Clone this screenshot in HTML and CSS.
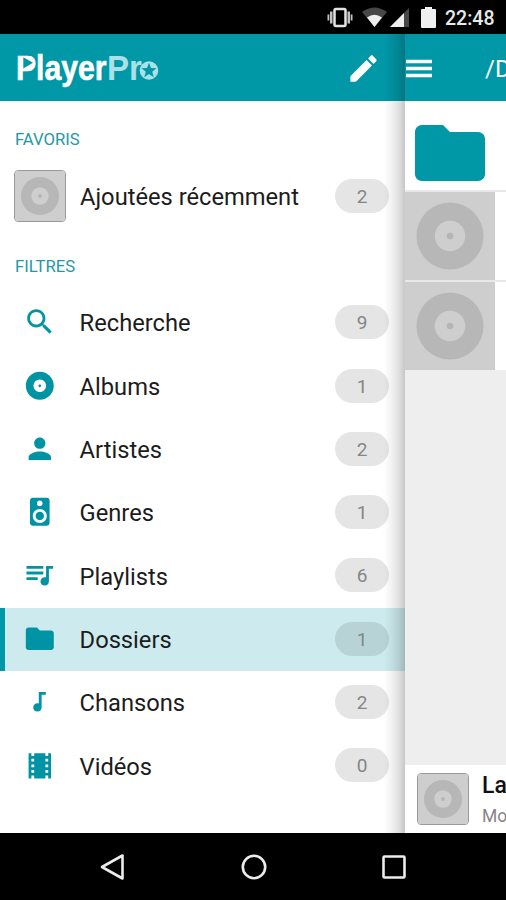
FILE: index.html
```html
<!DOCTYPE html>
<html lang="fr">
<head>
<meta charset="utf-8">
<title>PlayerPro</title>
<link rel="stylesheet" href="styles.css">
</head>
<body>
<svg class="defs" aria-hidden="true">
  <symbol id="folder" viewBox="0 0 24 24"><path d="M10 4H4c-1.1 0-1.99.9-1.99 2L2 18c0 1.1.9 2 2 2h16c1.1 0 2-.9 2-2V8c0-1.1-.9-2-2-2h-8l-2-2z"/></symbol>
  <symbol id="cover" viewBox="0 0 90 90"><rect width="90" height="90" fill="#cecece"/><circle cx="45" cy="45" r="34.3" fill="#b7b7b7"/><circle cx="45" cy="45" r="15.6" fill="#cecece"/><circle cx="45" cy="45" r="3.4" fill="#b5b5b5"/></symbol>
</svg>
<div class="phone">
  <header class="status">
    <svg class="status-icons" width="112" height="34" viewBox="0 0 112 34">
      <g fill="#c4c4c4"><rect x="10.500" y="9" width="11" height="17" rx="1.500" fill="none" stroke="#e4e4e4" stroke-width="2.500"/><rect x="6" y="11.500" width="2.500" height="12"/><rect x="3.500" y="14.500" width="1.800" height="6"/><rect x="23.500" y="11.500" width="2.500" height="12"/><rect x="26.700" y="14.500" width="1.800" height="6"/></g>
      <path d="M38 12Q50.500 3 63 12L50.500 27Z" fill="#474747"/><path d="M43 17.500Q50.500 12 58 17.500L50.500 27Z" fill="#eee"/>
      <path d="M66 27 85 8V27Z" fill="#474747"/><path d="M66 27 80 13V27Z" fill="#eee"/>
      <path d="M98 9h3V7h7v2h3q1 0 1 1v17q0 1-1 1H98q-1 0-1-1V10q0-1 1-1Z" fill="#f0f0f0"/>
    </svg>
    <span class="clock">22:48</span>
  </header>
  <main class="screen">
    <section class="drawer">
      <div class="bar">
        <svg class="logo" width="150" height="50" viewBox="0 0 150 50">
          <text x="-2" y="35.500" textLength="90.500" lengthAdjust="spacingAndGlyphs" fill="#fff" stroke="#fff" stroke-width=".6">Player</text>
          <text x="89" y="35.500" textLength="35" lengthAdjust="spacingAndGlyphs" fill="#a9e1e8">Pr</text>
          <rect x="3" y="12.500" width="12.500" height="14" rx="4" fill="#fff"/>
          <path d="M5.300 13.200 15 18.800 5.300 24.500Z" fill="#0097a7"/>
          <circle cx="131" cy="26.500" r="9.300" fill="#a9e1e8"/>
          <path d="M131 18.800 133 24.100 138.500 24.300 134.200 27.800 135.800 33.300 131 30.100 126.200 33.300 127.800 27.800 123.500 24.300 129 24.100Z" fill="#0097a7"/>
        </svg>
        <svg class="pencil" viewBox="0 0 24 24"><path d="M3 17.250V21h3.750L17.810 9.940l-3.750-3.750L3 17.250zM20.710 7.040c.39-.39.39-1.020 0-1.410l-2.340-2.340c-.39-.39-1.020-.39-1.410 0l-1.830 1.830 3.750 3.750 1.830-1.830z"/></svg>
      </div>
      <h2>FAVORIS</h2>
      <div class="row recent"><svg class="thumb"><use href="#cover"/></svg><span class="name">Ajoutées récemment</span><span class="pill">2</span></div>
      <h2>FILTRES</h2>
      <div class="row"><svg class="icon" viewBox="0 0 24 24"><path d="M15.500 14h-.79l-.28-.27C15.410 12.590 16 11.110 16 9.500 16 5.910 13.090 3 9.500 3S3 5.910 3 9.500 5.910 16 9.500 16c1.610 0 3.090-.59 4.230-1.570l.27.28v.79l5 4.990L20.490 19l-4.990-5zm-6 0C7.010 14 5 11.990 5 9.500S7.010 5 9.500 5 14 7.010 14 9.500 11.990 14 9.500 14z"/></svg><span class="name">Recherche</span><span class="pill">9</span></div>
      <div class="row"><svg class="icon" viewBox="0 0 24 24"><path d="M12 2C6.480 2 2 6.480 2 12s4.480 10 10 10 10-4.480 10-10S17.520 2 12 2zm0 14.500c-2.490 0-4.500-2.010-4.500-4.500S9.510 7.500 12 7.500s4.500 2.010 4.500 4.500-2.010 4.500-4.500 4.500zm0-5.500c-.55 0-1 .45-1 1s.45 1 1 1 1-.45 1-1-.45-1-1-1z"/></svg><span class="name">Albums</span><span class="pill">1</span></div>
      <div class="row"><svg class="icon" viewBox="0 0 24 24"><path d="M12 12c2.210 0 4-1.790 4-4s-1.790-4-4-4-4 1.790-4 4 1.790 4 4 4zm0 2c-2.670 0-8 1.340-8 4v2h16v-2c0-2.660-5.330-4-8-4z"/></svg><span class="name">Artistes</span><span class="pill">2</span></div>
      <div class="row"><svg class="icon" viewBox="0 0 24 24"><path d="M17 2H7c-1.100 0-2 .9-2 2v16c0 1.100.9 1.990 2 1.990L17 22c1.100 0 2-.9 2-2V4c0-1.100-.9-2-2-2zm-5 2c1.100 0 2 .9 2 2s-.9 2-2 2a2 2 0 1 1 0-4zm0 16c-2.760 0-5-2.240-5-5s2.240-5 5-5 5 2.240 5 5-2.240 5-5 5zm0-8c-1.660 0-3 1.340-3 3s1.340 3 3 3 3-1.340 3-3-1.340-3-3-3z"/></svg><span class="name">Genres</span><span class="pill">1</span></div>
      <div class="row"><svg class="icon" viewBox="0.500 1 24 24"><path d="M15 6H3v2h12V6zm0 4H3v2h12v-2zM3 16h8v-2H3v2zM17 6v8.180c-.31-.11-.65-.18-1-.18-1.660 0-3 1.340-3 3s1.340 3 3 3 3-1.340 3-3V8h3V6h-5z"/></svg><span class="name">Playlists</span><span class="pill">6</span></div>
      <div class="row selected"><svg class="icon"><use href="#folder"/></svg><span class="name">Dossiers</span><span class="pill">1</span></div>
      <div class="row"><svg class="icon" viewBox="5.700 1 24 24"><path d="M17 6v8.180c-.31-.11-.65-.18-1-.18-1.660 0-3 1.340-3 3s1.340 3 3 3 3-1.340 3-3V8h3V6h-5z"/></svg><span class="name">Chansons</span><span class="pill">2</span></div>
      <div class="row"><svg class="icon" viewBox="0 0 24 24"><path d="M18 3v2h-2V3H8v2H6V3H4v18h2v-2h2v2h8v-2h2v2h2V3h-2zM8 17H6v-2h2v2zm0-4H6v-2h2v2zm0-4H6V7h2v2zm10 8h-2v-2h2v2zm0-4h-2v-2h2v2zm0-4h-2V7h2v2z"/></svg><span class="name">Vidéos</span><span class="pill">0</span></div>
    </section>
    <section class="content">
      <div class="bar"><svg class="menu" width="26" height="20" viewBox="0 0 26 20"><path d="M0 2.500h26M0 9.500h26M0 16.500h26"/></svg><span class="path">/D</span></div>
      <div class="item"><svg class="folder"><use href="#folder"/></svg></div>
      <div class="item"><svg class="cover"><use href="#cover"/></svg></div>
      <div class="item"><svg class="cover"><use href="#cover"/></svg></div>
      <div class="mini"><svg class="thumb"><use href="#cover"/></svg><div class="track"><b>La</b><span>Mo</span></div></div>
    </section>
  </main>
  <nav class="nav">
    <svg viewBox="0 0 30 30"><path d="M4 15 24.500 3.500v23Z"/></svg>
    <svg viewBox="0 0 30 30"><circle cx="15" cy="15" r="11.200"/></svg>
    <svg viewBox="0 0 30 30"><rect x="4.500" y="4.500" width="21" height="21" rx="1"/></svg>
  </nav>
</div>
</body>
</html>
```
FILE: styles.css
```css
* { box-sizing: border-box; }
body { margin: 0; background: #000; font-family: Roboto, "Liberation Sans", sans-serif; }
svg { display: block; flex: none; }
.defs { width: 0; height: 0; position: absolute; }
.phone { width: 506px; height: 900px; display: flex; flex-direction: column; overflow: hidden; }
.status { height: 34px; flex: none; background: #000; display: flex; align-items: center; justify-content: flex-end; padding-right: 11px; }
.status-icons { margin-right: 9px; }
.clock { color: #e8e8e8; font-size: 19.5px; font-weight: 500; width: 50px; white-space: nowrap; padding-top: 2px; }
.screen { height: 799px; flex: none; display: flex; }
.drawer { width: 405px; flex: none; background: #fff; position: relative; }
.drawer::after { content: ""; position: absolute; top: 0; right: 0; bottom: 0; width: 21px; background: linear-gradient(to right, rgba(0,0,0,0), rgba(0,0,0,.05) 35%, rgba(0,0,0,.12) 70%, rgba(0,0,0,.22)); }
.bar { height: 67px; background: #0097a7; display: flex; align-items: center; }
.drawer .bar { padding: 0 24px 0 18px; justify-content: space-between; }
.logo { font: bold 35px "Liberation Sans", sans-serif; overflow: visible; margin-top: 3px; }
.pencil { width: 35px; height: 35px; fill: #fff; margin-top: 1px; }
h2 { margin: 0; height: 63.4px; padding: 15px 0 0 15px; font-size: 16.7px; line-height: 48px; font-weight: 400; color: #2598a6; }
.row { height: 63.3px; display: flex; align-items: center; padding: 0 16px 0 23px; color: #1c1c1c; }
.row.selected { background: #cdebee; box-shadow: inset 5px 0 #0097a7; }
.icon { width: 33.6px; height: 33.6px; fill: #0093a4; margin-top: -1px; }
.name { margin-left: 23px; flex: 1; font-size: 23.7px; white-space: nowrap; padding-top: 1.5px; }
.row.recent { padding-left: 14px; }
.recent .name { margin-left: 15px; }
.thumb { width: 52px; height: 52px; border: 1px solid #999; border-radius: 4px; }
.recent .thumb { margin-right: -1px; }
.pill { width: 54px; height: 34px; border-radius: 17px; background: rgba(0,0,0,.1); color: #858585; font-size: 19px; line-height: 35px; text-align: center; margin-top: -1px; }
.content { width: 101px; flex: none; background: #eee; overflow: hidden; display: flex; flex-direction: column; }
.content .bar { flex: none; }
.menu { stroke: #fff; stroke-width: 3.5; margin: 2px 53px 0 1px; }
.path { color: #fff; font-size: 24px; white-space: nowrap; padding-top: 2px; }
.item { height: 90px; flex: none; background: #fff; border-bottom: 2px solid #e8e8e8; }
.item:nth-child(2) { height: 91px; }
.item:nth-child(4) { height: 88px; border: 0; }
.folder { width: 84px; height: 84px; margin: 10px 0 0 3px; fill: #0097a7; }
.cover { width: 90px; height: 88px; background: #cecece; }
.mini { height: 68px; margin-top: auto; background: #fff; display: flex; align-items: center; padding-left: 12px; }
.track { margin-left: 13px; padding-top: 3px; display: flex; flex-direction: column; gap: 2px; }
.track b { font-size: 23px; line-height: 28px; font-weight: 500; color: #111; }
.track span { font-size: 17.5px; line-height: 28px; color: #858585; }
.nav { height: 67px; flex: none; background: #000; display: flex; align-items: center; gap: 110.5px; padding-left: 98px; }
.nav svg { width: 30px; height: 30px; fill: none; stroke: #ececec; stroke-width: 2.6; stroke-linejoin: round; }
```
